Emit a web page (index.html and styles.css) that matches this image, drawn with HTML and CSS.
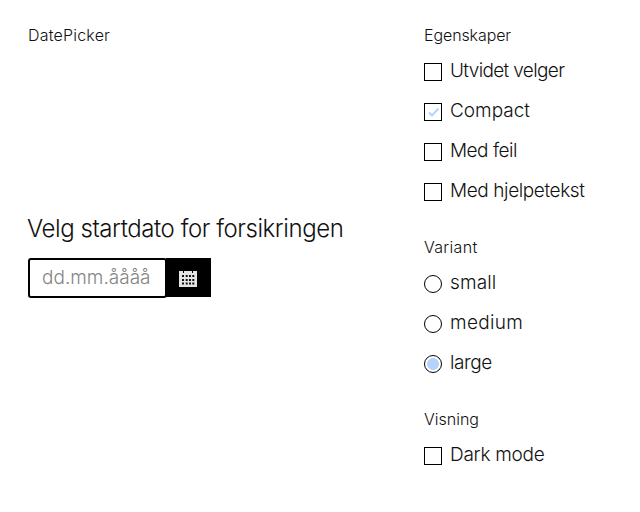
FILE: index.html
```html
<!DOCTYPE html>
<html lang="nb">
<head>
<meta charset="utf-8">
<title>DatePicker</title>
<link rel="stylesheet" href="styles.css">
</head>
<body>
<main class="example">
  <section class="preview">
    <h1 class="heading"><span class="t-title">DatePicker</span></h1>
    <div class="datepicker">
      <label class="datepicker-label" for="date"><span>Velg startdato for forsikringen</span></label>
      <div class="field">
        <div class="input" id="date"><span>dd.mm.åååå</span></div>
        <button class="calendar-button" type="button" aria-label="Åpne kalender">
          <svg width="18" height="17" viewBox="0 0 18 17">
            <path fill="#e4e4e4" d="M0 1h4v2h1V1h8v2h1V1h4v16H0z"/>
            <g fill="#111"><path d="M3 5h2v2H3zM6.7 5h2v2h-2zM10 5h2v2h-2zM13.3 5h2v2h-2zM3 9h2v2H3zM6.7 9h2v2h-2zM10 9h2v2h-2zM13.3 9h2v2h-2zM3 12.5h2v2H3zM6.7 12.5h2v2h-2zM10 12.5h2v2h-2zM13.3 12.5h2v2h-2z"/></g>
          </svg>
        </button>
      </div>
    </div>
  </section>
  <aside class="controls">
    <section class="group">
      <h2 class="heading"><span class="t-props">Egenskaper</span></h2>
      <div class="option"><i class="box"></i><span class="t-utvidet">Utvidet velger</span></div>
      <div class="option"><i class="box"><svg width="16" height="16" viewBox="0 0 16 16"><path d="M4 8.5l3 3 6.5-7" fill="none" stroke="#b5d3ff" stroke-width="2"/></svg></i><span class="t-compact">Compact</span></div>
      <div class="option"><i class="box"></i><span class="t-feil">Med feil</span></div>
      <div class="option"><i class="box"></i><span class="t-hjelp">Med hjelpetekst</span></div>
    </section>
    <section class="group">
      <h2 class="heading"><span class="t-variant">Variant</span></h2>
      <div class="option"><i class="radio"></i><span class="t-small">small</span></div>
      <div class="option"><i class="radio"></i><span class="t-medium">medium</span></div>
      <div class="option"><i class="radio selected"></i><span class="t-large">large</span></div>
    </section>
    <section class="group">
      <h2 class="heading"><span class="t-visning">Visning</span></h2>
      <div class="option"><i class="box"></i><span class="t-dark">Dark mode</span></div>
    </section>
  </aside>
</main>
</body>
</html>
```
FILE: styles.css
```css
* { box-sizing: border-box; }
body { margin: 0; background: #fff; color: #111; font-family: Inter, "Liberation Sans", sans-serif; font-weight: 300; }
.example { display: grid; grid-template-columns: 396px 1fr; height: 512px; padding: 23px 0 0 28px; }
.heading { margin: 0; font-size: 16px; font-weight: 300; line-height: 24px; height: 24px; white-space: nowrap; }
.datepicker { margin-top: 167px; }
.datepicker-label { display: block; height: 44px; line-height: 30px; font-size: 24px; letter-spacing: -0.43px; margin-left: -1px; white-space: nowrap; }
.field { display: flex; width: 184px; height: 40px; }
.input { width: 139px; height: 40px; border: 2px solid #000; border-radius: 3px; padding-left: 12px; font-size: 19px; line-height: 36px; color: #858585; white-space: nowrap; }
.calendar-button { width: 45px; height: 39px; margin-left: -1px; border: 0; padding: 1px 2px 0 0; background: #000; display: flex; align-items: center; justify-content: center; }
.group { margin-bottom: 23px; }
.option { display: flex; align-items: center; height: 40px; gap: 8px; font-size: 19px; line-height: 24px; white-space: nowrap; }
.group .heading { margin-bottom: 5px; }
.option span { margin-top: -3px; }
.box, .radio { flex: none; width: 18px; height: 18px; border: 1px solid #000; margin-top: -1px; }
.box svg { display: block; }
.radio { border-radius: 50%; margin-top: 0; }
.selected { background: radial-gradient(circle, #b5d3ff 5.6px, #fff 6.2px); }
.t-title { letter-spacing: 0.2px; }
.t-props { letter-spacing: -0.1px; }
.t-variant { letter-spacing: 0.3px; }
.t-utvidet { letter-spacing: -0.65px; }
.t-feil { letter-spacing: -0.5px; }
.t-hjelp { letter-spacing: -0.4px; }
.t-small { letter-spacing: 0.15px; }
.t-medium { letter-spacing: 0.3px; }
.t-large { letter-spacing: -0.4px; }
.t-dark { letter-spacing: -0.25px; }
```
